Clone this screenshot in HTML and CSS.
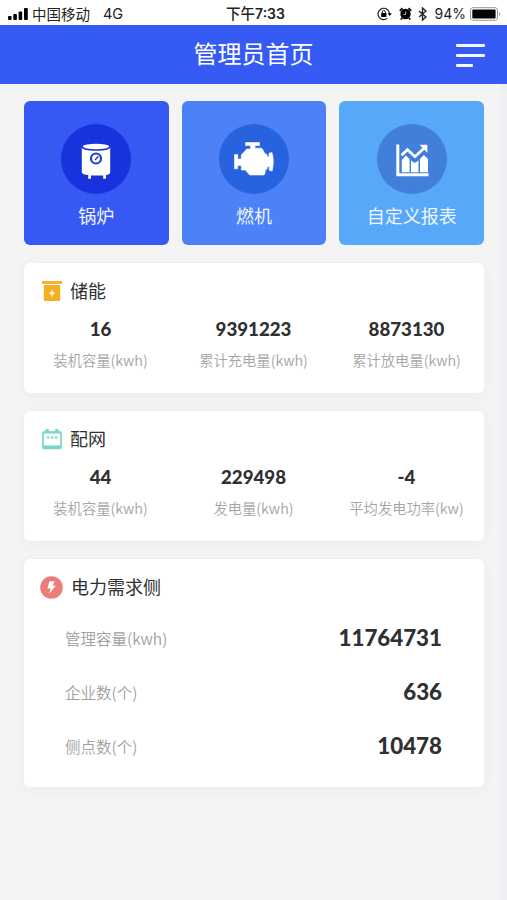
FILE: index.html
```html
<!DOCTYPE html>
<html lang="zh-CN">
<head>
<meta charset="utf-8">
<title>管理员首页</title>
<link rel="stylesheet" href="styles.css">
</head>
<body>
<div class="status">
  <div class="status-left">
    <svg class="signal" width="20" height="12" viewBox="0 0 20 12"><rect x="0" y="8" width="3.6" height="4" rx="1"/><rect x="5.3" y="6" width="3.6" height="6" rx="1"/><rect x="10.6" y="3.4" width="3.6" height="8.6" rx="1"/><rect x="16" y="0" width="3.8" height="12" rx="1"/></svg>
    <span class="carrier">中国移动</span><span class="network">4G</span>
  </div>
  <div class="clock">下午<span>7:33</span></div>
  <div class="status-right">
    <svg class="lock" width="15" height="14" viewBox="0 0 15 14"><path d="M12.5 7A5.7 5.7 0 1 0 10.4 11.4" fill="none" stroke="#222" stroke-width="1.2"/><path d="M10.6 6.2h4.2l-2.1 2.8z"/><rect x="4.2" y="6" width="5.2" height="4" rx=".5"/><path d="M5.3 6V5a1.5 1.5 0 0 1 3 0v1" fill="none" stroke="#222"/></svg>
    <svg class="alarm" width="13" height="13" viewBox="0 0 13 13"><circle cx="6.5" cy="7" r="5.2"/><path d="M.8 3.9 3.5 1.2M12.2 3.900 9.500 1.200M3 11l-1.100 1.500M10 11l1.100 1.500" stroke="#111" stroke-width="2"/><path d="M6.700 4.500v3H4.500" fill="none" stroke="#ddd" stroke-width=".8"/></svg>
    <svg class="bluetooth" width="9" height="14" viewBox="0 0 9 14"><path d="m1 4 7 6-3.5 3V1L8 4l-7 6" fill="none" stroke="#222" stroke-width="1.4"/></svg>
    <span class="percent">94%</span>
    <svg width="31" height="14" viewBox="0 0 31 14"><rect x=".5" y=".7" width="27" height="12.6" rx="2.5" fill="#fff" stroke="#999"/><rect x="2.3" y="2.4" width="23.3" height="9.2" rx="1" fill="#050505"/><path d="M29 5q2 2 0 4z" fill="#888"/></svg>
  </div>
</div>
<header class="header">
  <h1 class="title">管理员首页</h1>
  <div class="menu"><i></i><i></i><i class="short"></i></div>
</header>
<main class="content">
  <nav class="tiles">
    <a class="tile boiler"><span class="disc"><svg width="70" height="70" viewBox="0 0 70 70"><ellipse cx="35" cy="22.5" rx="13" ry="2.7" fill="#fff"/><path d="M20.8 23q0 3.8 14.2 3.8T49.2 23v25q0 2.500-4.200 3v3.800h-2.800v-3.400H30v3.400h-2.800V51q-6.400-.4-6.400-3z" fill="#fff"/><circle cx="35" cy="34.5" r="5" fill="#fff" stroke="#2141c9" stroke-width="2.2"/><path d="m34 36 3.400-3.800" stroke="#2141c9" stroke-width="1.400"/></svg></span><span class="name">锅炉</span></a>
    <a class="tile engine"><span class="disc"><svg width="70" height="70" viewBox="0 0 70 70"><path fill="#fff" stroke="#fff" stroke-width=".6" stroke-linejoin="round" d="M26.500 18.500h14v3h-4.500v2.700h6q1 0 1.500 1l2.500 4.500q2.500 0 2.500 3.300h1.500v-3.800l3-.7q2.500 8 .2 18.500l-3-.7v-3.800h-1.700q0 3-2 3.500l-.8 4q-.2 1-1.500 1H31.500q-1 0-1.700-.8l-3.300-4.200h-4.200v-4.500h-3.600v3.300h-3.200V30.500h3.200v4.500h3.600v-4l5.500-6h3.700v-3.500h-5z"/></svg></span><span class="name">燃机</span></a>
    <a class="tile report"><span class="disc"><svg width="70" height="70" viewBox="0 0 70 70"><path d="M20.800 20.500v30.200H51.500" fill="none" stroke="#fff" stroke-width="3"/><path d="m24.500 31.200 6-5.500 7.500 7 10-9.500" fill="none" stroke="#fff" stroke-width="2.800"/><path d="M42.500 20.800h7.900v7.900z" fill="#fff"/><path d="M24.800 36l4-4.500 3.800 3.500v13.300h-7.800zM34 36.500l3.800 2.500 3.700-2.500v11.800H34zM43 35l3.800-4 4.200 4v13.300h-8z" fill="#fff"/></svg></span><span class="name">自定义报表</span></a>
  </nav>
  <section class="card">
    <div class="heading"><svg width="22" height="22" viewBox="0 0 22 22"><path d="M1 1h20v3H1z" fill="#f5b13a"/><path d="M2.800 5h16.400V19.500q0 1.500-1.500 1.500H4.300Q2.800 21 2.800 19.500z" fill="#f3af22"/><path d="M11.900 8.500 7.800 14.300h2.700l-.6 3.700 4.400-6h-2.900z" fill="#fff5d8"/></svg><h2>储能</h2></div>
    <div class="stats">
      <div class="stat"><b>16</b><span>装机容量(kwh)</span></div>
      <div class="stat"><b>9391223</b><span>累计充电量(kwh)</span></div>
      <div class="stat"><b>8873130</b><span>累计放电量(kwh)</span></div>
    </div>
  </section>
  <section class="card">
    <div class="heading"><svg width="22" height="22" viewBox="0 0 22 22"><rect x="2" y="4" width="18" height="16.500" rx="1.500" fill="#fafffe" stroke="#79d5c5" stroke-width="1.700"/><path d="M2 3.500h18v2H2zM4.500 1h3.300v3H4.500zM14.200 1h3.300v3h-3.300zM2 17.500h18V20q0 1-1 1H3q-1 0-1-1z" fill="#79d5c5"/><path d="M6 9.500h2.500M10 9.500h2.500M14 9.500h2.500" stroke="#79d5c5" stroke-width="2"/></svg><h2>配网</h2></div>
    <div class="stats">
      <div class="stat"><b>44</b><span>装机容量(kwh)</span></div>
      <div class="stat"><b>229498</b><span>发电量(kwh)</span></div>
      <div class="stat"><b>-4</b><span>平均发电功率(kw)</span></div>
    </div>
  </section>
  <section class="card demand">
    <div class="heading"><svg width="23" height="23" viewBox="0 0 23 23"><circle cx="11.500" cy="11.500" r="11.300" fill="#ed7d79"/><path d="M9.500 5.200h5L12.800 9.800h3L9 18l1.800-5.500H7.300z" fill="#fff"/></svg><h2>电力需求侧</h2></div>
    <div class="row"><span>管理容量(kwh)</span><b>11764731</b></div>
    <div class="row"><span>企业数(个)</span><b>636</b></div>
    <div class="row"><span>侧点数(个)</span><b>10478</b></div>
  </section>
</main>
</body>
</html>
```
FILE: styles.css
```css
* { box-sizing: border-box; }
body { margin: 0; min-height: 900px; background: #f4f4f5; color: #303030; font-family: "Noto Sans CJK SC", sans-serif; }
svg { display: block; flex: none; }
.status { height: 25px; padding: 1px 6px 0 8px; display: grid; grid-template-columns: 1fr auto 1fr; align-items: center; background: #fff; color: #222; font-size: 14.5px; line-height: 24px; }
.status-left, .status-right { display: flex; align-items: center; }
.carrier { margin-left: 4px; }
.network { margin-left: 13px; font-family: Inter, sans-serif; font-size: 14.5px; }
.clock { font-weight: 500; padding-left: 2px; }
.clock span { font: 600 14px/24px Inter, sans-serif; }
.status-right { justify-content: flex-end; }
.alarm { margin-left: 7px; }
.bluetooth { margin-left: 6px; }
.percent { margin: 0 4px 0 8px; font-family: Inter, sans-serif; font-size: 14px; }
.header { height: 59px; display: grid; grid-template-columns: 1fr auto 1fr; align-items: center; padding-right: 22px; padding-left: 22px; background: #365af4; color: #fff; }
.title { grid-column: 2; margin: 0; padding-bottom: 3px; font-size: 24px; line-height: 56px; font-weight: 400; }
.menu { justify-self: end; width: 29px; display: grid; gap: 7px; padding-top: 1px; }
.menu i { height: 3px; background: #f5f7ff; border-radius: 1px; }
.menu .short { width: 17px; }
.content { min-height: 816px; padding: 17px 16px 0 24px; border-right: 7px solid #f0f0f4; }
.tiles { display: grid; grid-template-columns: repeat(3, 1fr); gap: 13px; height: 144px; }
.tile { display: flex; flex-direction: column; align-items: center; padding-top: 23px; border-radius: 6px; color: #eff6ff; }
.boiler { background: #3759f3; }
.engine { background: #4c81f7; }
.report { background: #58a8f9; }
.disc { width: 70px; height: 70px; border-radius: 50%; background: #1833dd; }
.engine .disc { background: #2763df; }
.report .disc { background: #427fdb; }
.name { margin-top: 8px; font-size: 18px; line-height: 26px; }
.card { height: 130px; margin-top: 18px; padding: 15px 0 0 17px; background: #fff; border-radius: 6px; box-shadow: 0 2px 15px rgba(0, 0, 0, .045); }
.heading { display: flex; align-items: center; gap: 7px; height: 24px; }
.heading svg { position: relative; top: 1px; }
.heading h2 { margin: 0; font-size: 18px; line-height: 24px; font-weight: 400; }
.stats { display: grid; grid-template-columns: repeat(3, 153px); margin: 14px 0 0 -17px; text-align: center; }
.stat b { display: block; font: 900 18.7px/26px Lato, sans-serif; }
.stat span { display: block; margin-top: 6px; color: #a5a5a5; font-size: 14.3px; line-height: 24px; font-weight: 350; }
.demand { height: 228px; padding: 16px 42px 0 16px; }
.demand .heading { gap: 8px; }
.demand svg { top: 0; }
.demand h2 { position: relative; top: -1px; }
.row { display: flex; align-items: center; justify-content: space-between; height: 54px; padding-left: 25px; }
.heading + .row { margin-top: 12px; }
.row span { font-size: 15.5px; color: #a0a0a0; font-weight: 350; }
.row b { font: 900 22.3px/30px Lato, sans-serif; }
```
